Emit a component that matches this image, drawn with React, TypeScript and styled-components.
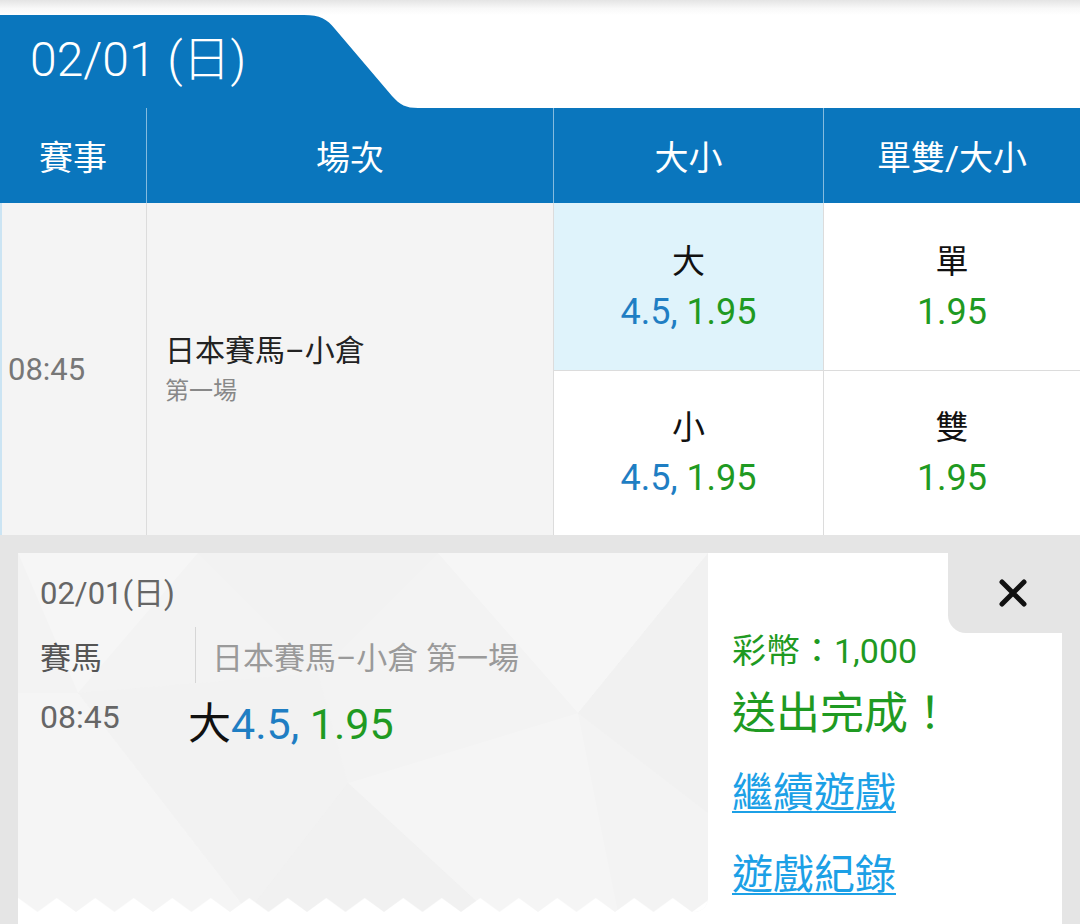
import React from "react";
import styled, { createGlobalStyle } from "styled-components";

const BLUE = "#0a76bd";
const GREEN = "#1f9a22";
const NUM_BLUE = "#1f7ec3";
const LINK = "#1ca0e6";
const OVERLAY = "#e5e5e5";

const GlobalStyle = createGlobalStyle`
  html, body { margin: 0; padding: 0; background: #fff; }
  body { font-family: Roboto, "Noto Sans CJK TC", "Noto Sans", sans-serif; }
  * { box-sizing: border-box; }
`;

const Page = styled.div`
  width: 1080px;
  height: 924px;
  overflow: hidden;
  display: flex;
  flex-direction: column;
  background: #fff;
`;

const TopShade = styled.div`
  flex: none;
  height: 15px;
  background: linear-gradient(#e4e4e4, #f8f8f8 55%, #fff);
`;

const TabRow = styled.div`
  flex: none;
  display: flex;
  height: 93px;
`;

const Tab = styled.div`
  width: 300px;
  background: ${BLUE};
  color: #fff;
  font-size: 48px;
  font-weight: 300;
  padding: 0 0 14px 30px;
  display: flex;
  align-items: center;
  white-space: nowrap;
`;

const TabSlant = styled.svg`
  display: block;
  flex: none;
`;

const Table = styled.div`
  flex: none;
  display: grid;
  grid-template-columns: 146px 407px 270px 257px;
  grid-template-rows: 95px 167px 165px;
`;

const HeadCell = styled.div<{ $divider?: boolean }>`
  background: ${BLUE};
  color: #fff;
  font-size: 34px;
  display: flex;
  align-items: center;
  justify-content: center;
  border-left: ${(p) => (p.$divider ? "1px solid rgba(255,255,255,0.5)" : "none")};
`;

const TimeCell = styled.div`
  grid-row: span 2;
  background: #f4f4f4;
  border-left: 2px solid #cbe4f3;
  padding-left: 6px;
  display: flex;
  align-items: center;
  font-size: 31px;
  color: #777;
`;

const NameCell = styled.div`
  grid-row: span 2;
  background: #f4f4f4;
  border-left: 1px solid #dcdcdc;
  padding-left: 18px;
  display: flex;
  flex-direction: column;
  justify-content: center;
`;

const RaceName = styled.div`
  font-size: 30px;
  line-height: 44px;
  color: #222;
`;

const RaceSub = styled.div`
  font-size: 24px;
  line-height: 36px;
  color: #888;
`;

const OptCell = styled.div<{ $active?: boolean; $top?: boolean }>`
  background: ${(p) => (p.$active ? "#dff3fb" : "#fff")};
  border-left: 1px solid #dcdcdc;
  border-top: ${(p) => (p.$top ? "none" : "1px solid #dcdcdc")};
  display: flex;
  flex-direction: column;
  align-items: center;
  justify-content: center;
`;

const OptLabel = styled.div`
  font-size: 33px;
  line-height: 50px;
  color: #111;
`;

const OptValue = styled.div`
  font-size: 36px;
  line-height: 50px;
`;

const Num = styled.span<{ $c: string }>`
  color: ${(p) => p.$c};
`;

const Overlay = styled.div`
  flex: 1;
  background: ${OVERLAY};
  padding: 18px 18px 0;
  display: flex;
  flex-direction: column;
`;

const Panel = styled.div`
  flex: 1;
  display: flex;
  background: #fff;
`;

const Ticket = styled.div`
  position: relative;
  flex: none;
  width: 690px;
  height: 359px;
  background: #f3f3f3;
  padding: 21px 22px 0;
  overflow: hidden;
  border-bottom-right-radius: 14px;
`;

const TicketBg = styled.svg`
  position: absolute;
  inset: 0;
  pointer-events: none;
`;

const ZigZag = styled.svg`
  position: absolute;
  left: 0;
  right: 0;
  bottom: 0;
`;

const TicketBody = styled.div`
  position: relative;
  display: flex;
  flex-direction: column;
`;

const TicketDate = styled.div`
  font-size: 31px;
  line-height: 40px;
  color: #666;
`;

const GameRow = styled.div`
  display: flex;
  align-items: center;
  height: 56px;
  margin-top: 13px;
`;

const GameType = styled.div`
  width: 155px;
  font-size: 31px;
  color: #555;
`;

const VDivider = styled.div`
  width: 1px;
  align-self: stretch;
  background: #d6d6d6;
  margin-right: 16px;
`;

const GameName = styled.div`
  font-size: 31px;
  color: #9a9a9a;
`;

const BetRow = styled.div`
  display: flex;
  align-items: flex-start;
  margin-top: 14px;
`;

const BetTime = styled.div`
  width: 148px;
  font-size: 32px;
  line-height: 40px;
  color: #666;
`;

const BetPick = styled.div`
  font-size: 43px;
  line-height: 54px;
  color: #111;
`;

const Result = styled.div`
  position: relative;
  flex: 1;
  padding: 76px 0 0 24px;
  display: flex;
  flex-direction: column;
`;

const CloseTab = styled.button`
  position: absolute;
  top: 0;
  right: 0;
  width: 114px;
  height: 80px;
  border: none;
  padding: 0 0 0 16px;
  background: ${OVERLAY};
  border-bottom-left-radius: 18px;
  display: flex;
  align-items: center;
  justify-content: center;
  cursor: pointer;
`;

const Coins = styled.div`
  font-size: 34px;
  line-height: 44px;
  color: ${GREEN};
`;

const Done = styled.div`
  font-size: 44px;
  line-height: 56px;
  margin-top: 13px;
  color: ${GREEN};
`;

const LinkText = styled.a<{ $gap: number }>`
  font-size: 41px;
  line-height: 56px;
  margin-top: ${(p) => p.$gap}px;
  color: ${LINK};
  text-decoration: underline;
  text-decoration-thickness: 2px;
  text-underline-offset: 4px;
  align-self: flex-start;
`;

function Odds({ line, odds }: { line?: string; odds: string }) {
  return (
    <OptValue>
      {line && <Num $c={NUM_BLUE}>{line}, </Num>}
      <Num $c={GREEN}>{odds}</Num>
    </OptValue>
  );
}

export default function App() {
  return (
    <Page>
      <GlobalStyle />
      <TopShade />
      <TabRow>
        <Tab>02/01 (日)</Tab>
        <TabSlant width="130" height="93" viewBox="0 0 130 93">
          <path
            d="M0 0 H4 C20 0 27 4 35 14 L92 81 C100 90 106 93 118 93 H130 V93 H0 Z"
            fill={BLUE}
          />
        </TabSlant>
      </TabRow>
      <Table>
        <HeadCell>賽事</HeadCell>
        <HeadCell $divider>場次</HeadCell>
        <HeadCell $divider>大小</HeadCell>
        <HeadCell $divider>單雙/大小</HeadCell>

        <TimeCell>08:45</TimeCell>
        <NameCell>
          <RaceName>日本賽馬–小倉</RaceName>
          <RaceSub>第一場</RaceSub>
        </NameCell>
        <OptCell $active $top>
          <OptLabel>大</OptLabel>
          <Odds line="4.5" odds="1.95" />
        </OptCell>
        <OptCell $top>
          <OptLabel>單</OptLabel>
          <Odds odds="1.95" />
        </OptCell>
        <OptCell>
          <OptLabel>小</OptLabel>
          <Odds line="4.5" odds="1.95" />
        </OptCell>
        <OptCell>
          <OptLabel>雙</OptLabel>
          <Odds odds="1.95" />
        </OptCell>
      </Table>
      <Overlay>
        <Panel>
          <Ticket>
            <TicketBg width="690" height="359" viewBox="0 0 690 359">
              <polygon points="0,0 180,0 60,140" fill="#ffffff" opacity="0.25" />
              <polygon points="180,0 420,0 300,120" fill="#ececec" opacity="0.18" />
              <polygon points="420,0 690,0 560,160" fill="#ffffff" opacity="0.3" />
              <polygon points="560,160 690,0 690,260" fill="#ededed" opacity="0.2" />
              <polygon points="0,140 60,140 230,359 0,359" fill="#ffffff" opacity="0.2" />
              <polygon points="230,359 330,230 470,359" fill="#ebebeb" opacity="0.25" />
              <polygon points="330,230 560,160 600,359 470,359" fill="#ffffff" opacity="0.18" />
              <polygon points="60,140 300,120 330,230 230,359" fill="#f0f0f0" opacity="0.2" />
            </TicketBg>
            <ZigZag width="690" height="14" viewBox="0 0 690 14">
              <defs>
                <pattern id="zz" x="19.5" y="0" width="38.5" height="14" patternUnits="userSpaceOnUse">
                  <polygon points="0,14 19.25,0 38.5,14" fill="#ffffff" />
                </pattern>
              </defs>
              <rect x="0" y="0" width="690" height="14" fill="url(#zz)" />
            </ZigZag>
            <TicketBody>
              <TicketDate>02/01(日)</TicketDate>
              <GameRow>
                <GameType>賽馬</GameType>
                <VDivider />
                <GameName>日本賽馬–小倉 第一場</GameName>
              </GameRow>
              <BetRow>
                <BetTime>08:45</BetTime>
                <BetPick>
                  大<Num $c={NUM_BLUE}>4.5, </Num>
                  <Num $c={GREEN}>1.95</Num>
                </BetPick>
              </BetRow>
            </TicketBody>
          </Ticket>
          <Result>
            <CloseTab aria-label="close">
              <svg width="30" height="30" viewBox="0 0 30 30">
                <path d="M4 4 L26 26 M26 4 L4 26" stroke="#111" strokeWidth="5" strokeLinecap="round" />
              </svg>
            </CloseTab>
            <Coins>彩幣：1,000</Coins>
            <Done>送出完成！</Done>
            <LinkText $gap={23}>繼續遊戲</LinkText>
            <LinkText $gap={26}>遊戲紀錄</LinkText>
          </Result>
        </Panel>
      </Overlay>
    </Page>
  );
}
